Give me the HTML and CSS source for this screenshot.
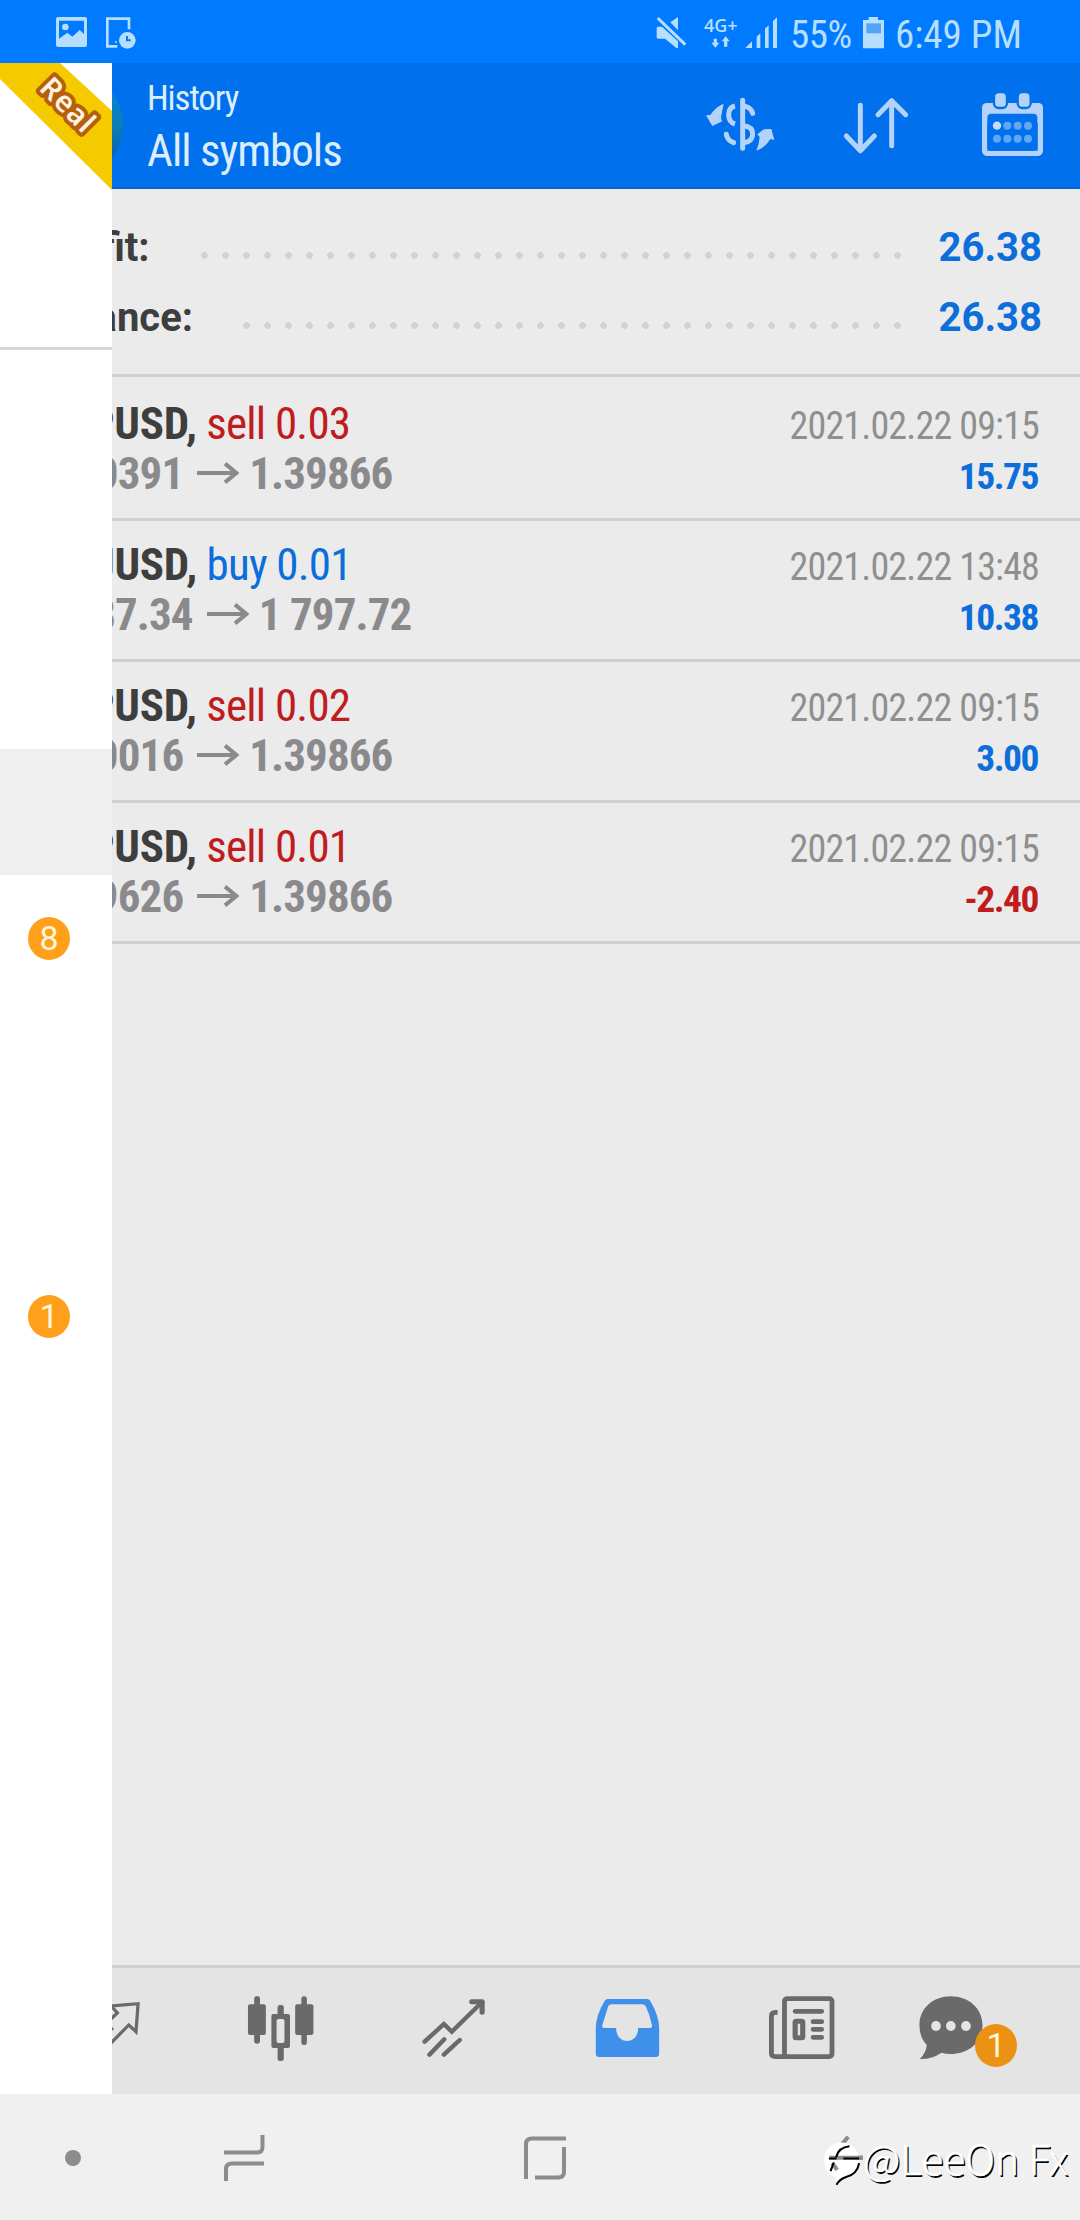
FILE: index.html
```html
<!DOCTYPE html>
<html lang="en">
<head>
<meta charset="utf-8">
<title>History</title>
<link rel="stylesheet" href="styles.css">
</head>
<body>
<div class="statusbar">
  <svg class="ic-photo" viewBox="168 51 93 90" width="31" height="30"><path fill="#b6deff" fill-rule="evenodd" d="M174 51H255Q261 51 261 57V135Q261 141 255 141H174Q168 141 168 135V57Q168 51 174 51ZM177 62V116L202 98L217 110L239 90L252 102V62Z"/><circle cx="196" cy="81" r="10" fill="#b6deff"/></svg>
  <svg class="ic-tablet" viewBox="318 51 90 96" width="30" height="32"><path fill="none" stroke="#b6deff" stroke-width="8" d="M387 88V56H322V139H352"/><circle cx="348" cy="126" r="3" fill="#b6deff"/><circle cx="382" cy="121" r="25" fill="#b6deff"/><path fill="none" stroke="#0a78e8" stroke-width="6" d="M381 108V121H392"/></svg>
  <svg class="ic-mute" viewBox="45 45 96 105" width="32" height="35"><path fill="#b6deff" d="M91 67L114 51V91ZM50 84Q50 80 54 80H66L114 124V144H109L75 116H54Q50 116 50 112Z"/><path d="M53 54L136 134" stroke="#b6deff" stroke-width="9"/></svg>
  <div class="network"><span class="net-label">4G+</span>
    <svg class="ic-data" viewBox="213 108 57 36" width="19" height="12"><path fill="#b6deff" d="M221 116H231V128H238L226 143L214 128H221ZM252 140H262V124H269L257 109L245 124H252Z"/></svg>
  </div>
  <svg class="ic-signal" viewBox="315 51 96 93" width="32" height="31"><path fill="#b6deff" d="M316 144L336 124V144ZM350 110L361 100V144H350ZM375 86L386 76V144H375ZM399 63L411 52V144H399Z"/></svg>
  <span class="cond battery-pct">55%</span>
  <svg class="ic-battery" viewBox="669 51 63 96" width="21" height="32"><path fill="#b6deff" d="M686 51H714V60H732V145H669V60H686Z"/><path fill="#55a3f5" d="M679 70H723V100H679Z"/></svg>
  <span class="cond clock">6:49 PM</span>
</div>

<div class="app">
  <header class="header">
    <div class="avatar"></div>
    <div class="titles"><div class="cond title-small">History</div><div class="cond title-big">All symbols</div></div>
    <svg class="ic-currency" viewBox="189 279 219 195" width="73" height="65"><g fill="#b5d3f8"><path d="M251 311L243 351Q244 362 247 364L217 378L198 346L211 345Q226 321 251 311Z"/><path d="M349 452Q358 430 359 411L352 403L372 388L394 387L403 420L391 417Q376 443 349 452Z"/></g><g fill="none" stroke="#b5d3f8" stroke-width="15"><path stroke-linecap="round" d="M308 301V445"/><path d="M285 318Q266 322 266 344Q266 366 285 372"/><path stroke-linecap="round" d="M259 403Q262 421 281 428"/><path stroke-linecap="round" d="M316 319Q334 324 338 340"/><path d="M312 377Q338 380 338 402Q338 424 312 428"/></g></svg>
    <svg class="ic-sort" viewBox="606 279 204 195" width="68" height="65"><path fill="none" stroke="#b5d3f8" stroke-width="15" stroke-linecap="round" stroke-linejoin="round" d="M661 316V450M619 408L661 452L703 408M755 437V304M714 344L755 302L797 344"/></svg>
    <svg class="ic-calendar" viewBox="1020 279 195 195" width="65" height="65"><rect x="1034" y="325" width="167" height="135" rx="8" fill="none" stroke="#b5d3f8" stroke-width="16"/><rect x="1026" y="309" width="183" height="60" rx="14" fill="#b5d3f8"/><rect x="1042" y="341" width="150" height="111" rx="12" fill="#0070ec"/><g fill="#b5d3f8" stroke="#0070ec" stroke-width="7"><rect x="1062" y="276" width="39" height="48" rx="14"/><rect x="1133" y="276" width="39" height="48" rx="14"/></g><g fill="#60a7f5"><circle cx="1102" cy="377" r="12"/><circle cx="1133" cy="377" r="12"/><circle cx="1164" cy="377" r="12"/><circle cx="1071" cy="416" r="12"/><circle cx="1102" cy="416" r="12"/><circle cx="1133" cy="416" r="12"/><circle cx="1164" cy="416" r="12"/></g><circle cx="1071" cy="377" r="12.500" fill="#c6dcfb"/></svg>
  </header>

  <section class="summary">
    <div class="sum-row"><span class="sum-label">Profit:</span><span class="dots dots-long"></span><span class="sum-value">26.38</span></div>
    <div class="sum-row"><span class="sum-label">Balance:</span><span class="dots dots-short"></span><span class="sum-value">26.38</span></div>
  </section>

  <main class="deals">
    <article class="deal first">
      <div class="line cond"><span class="left"><b class="symbol">GBPUSD,</b> <span class="sell">sell 0.03</span></span><span class="time">2021.02.22 09:15</span></div>
      <div class="line cond"><span class="left price">1.40391<svg class="arrow" viewBox="0 0 126 66" width="42" height="22"><path fill="none" stroke="#8a8a8c" stroke-width="12" d="M0 33H117M84 5L118 33L84 61"/></svg>1.39866</span><b class="profit plus">15.75</b></div>
    </article>
    <article class="deal">
      <div class="line cond"><span class="left"><b class="symbol">XAUUSD,</b> <span class="buy">buy 0.01</span></span><span class="time">2021.02.22 13:48</span></div>
      <div class="line cond"><span class="left price">1 787.34<svg class="arrow" viewBox="0 0 126 66" width="42" height="22"><path fill="none" stroke="#8a8a8c" stroke-width="12" d="M0 33H117M84 5L118 33L84 61"/></svg>1 797.72</span><b class="profit plus">10.38</b></div>
    </article>
    <article class="deal">
      <div class="line cond"><span class="left"><b class="symbol">GBPUSD,</b> <span class="sell">sell 0.02</span></span><span class="time">2021.02.22 09:15</span></div>
      <div class="line cond"><span class="left price">1.40016<svg class="arrow" viewBox="0 0 126 66" width="42" height="22"><path fill="none" stroke="#8a8a8c" stroke-width="12" d="M0 33H117M84 5L118 33L84 61"/></svg>1.39866</span><b class="profit plus">3.00</b></div>
    </article>
    <article class="deal">
      <div class="line cond"><span class="left"><b class="symbol">GBPUSD,</b> <span class="sell">sell 0.01</span></span><span class="time">2021.02.22 09:15</span></div>
      <div class="line cond"><span class="left price">1.39626<svg class="arrow" viewBox="0 0 126 66" width="42" height="22"><path fill="none" stroke="#8a8a8c" stroke-width="12" d="M0 33H117M84 5L118 33L84 61"/></svg>1.39866</span><b class="profit minus">-2.40</b></div>
    </article>
  </main>

  <nav class="tabs">
    <svg class="tab-quotes" viewBox="290.4 165 116.2 201" width="40" height="67" preserveAspectRatio="none"><path fill="none" stroke="#6a6a6a" stroke-width="9.500" d="M300 200L401 191L395 275L374 255L310 322M325 200L341 219L322 237M320 262L328 270"/></svg>
    <svg class="tab-candles" viewBox="711.4 165 209 201" width="72" height="67" preserveAspectRatio="none"><g fill="#6a6a6a"><rect x="720" y="193" width="52" height="92" rx="6"/><rect x="738" y="169" width="17" height="142" rx="7"/><rect x="857" y="193" width="53" height="92" rx="6"/><rect x="875" y="169" width="16" height="146" rx="7"/><rect x="788" y="222" width="54" height="102" rx="6"/><rect x="806" y="195" width="18" height="168" rx="7"/></g><rect x="803" y="237" width="23" height="72" rx="6" fill="#e4e4e4"/></svg>
    <svg class="tab-trend" viewBox="1219.6 165 197.500 201" width="68" height="67" preserveAspectRatio="none"><path fill="none" stroke="#6a6a6a" stroke-width="13" stroke-linecap="round" d="M1233 305L1289 252L1312 275L1400 186M1247 344L1290 298M1289 344L1335 300"/><path fill="none" stroke="#6a6a6a" stroke-width="15" stroke-linecap="round" stroke-linejoin="round" d="M1370 185H1400V217"/></svg>
    <svg class="tab-history" viewBox="156.8 165 197.500 201" width="68" height="67" preserveAspectRatio="none"><path fill="#3f90ea" fill-rule="evenodd" d="M197 177H311Q317 177 320 182Q346 227 346 265V342Q346 351 336 351H172Q162 351 162 342V265Q162 226 188 182Q191 177 197 177ZM208 193Q201 193 198 199L181 255Q179 264 186 264H221C221 316 285 316 285 264H320Q327 264 325 255Q319 225 307 199Q304 193 297 193Z"/></svg>
    <svg class="tab-news" viewBox="659.2 165 203.300 201" width="70" height="67" preserveAspectRatio="none"><g fill="none" stroke="#6a6a6a" stroke-width="14"><rect x="710" y="176" width="138" height="174" rx="8"/><path d="M690 217H684Q672 217 672 229V340Q672 350 684 350H715"/><rect x="741" y="244" width="22" height="49" rx="3" stroke-width="15"/><path stroke-linecap="round" d="M741 214H818M793 245H818M793 268H818M793 292H818"/></g></svg>
    <div class="tab-chat">
      <svg viewBox="1097.700 165 197.500 201" width="68" height="67" preserveAspectRatio="none"><path fill="#6a6a6a" d="M1193 169C1245 169 1285 205 1285 256C1285 307 1245 342 1193 342Q1178 342 1166 338Q1138 358 1103 357Q1122 337 1123 315Q1102 292 1102 256C1102 205 1141 169 1193 169Z"/><g fill="#e4e4e4"><ellipse cx="1150" cy="258" rx="14" ry="15"/><ellipse cx="1193" cy="258" rx="14" ry="15"/><ellipse cx="1237" cy="258" rx="14" ry="15"/></g></svg>
      <span class="badge chat-badge">1</span>
    </div>
  </nav>

  <aside class="drawer">
    <div class="account"><svg class="ribbon" viewBox="0 0 112 128" width="112" height="128"><path fill="#f5cb00" d="M0 0H60L112 48V127L0 16Z"/><text x="68" y="42" transform="rotate(45 68 42)" dy="10" text-anchor="middle" class="ribbon-text">Real</text></svg></div>
    <div class="menu-gap"></div>
    <div class="menu-item selected"></div>
    <div class="menu-item"><span class="badge">8</span></div>
    <div class="menu-spacer"></div>
    <div class="menu-item"><span class="badge">1</span></div>
  </aside>
</div>

<footer class="navbar">
  <span class="nav-dot"></span>
  <svg class="nav-recent" viewBox="0 0 41 48" width="41" height="48"><path fill="none" stroke="#8c8c8c" stroke-width="4" d="M38.500 1V13Q38.500 18.500 33 18.500H0M40 29.500H8Q2 29.500 2 35V47"/></svg>
  <svg class="nav-home" viewBox="0 0 42 44" width="42" height="44"><path fill="none" stroke="#8c8c8c" stroke-width="4" d="M2 43V8Q2 2.500 8 2.500H42M40 11V36Q40 41.500 34 41.500H11"/></svg>
  <svg class="nav-back" viewBox="820 582 125 160" width="43" height="53" preserveAspectRatio="none"><path fill="none" stroke="#8c8c8c" stroke-width="12" d="M896 590L845 654L864 690M840 654H939"/><path fill="#fff" d="M876 608C905 608 928 630 928 660C928 690 905 712 880 714L862 728L860 712C840 708 826 688 826 660C826 630 848 608 876 608Z"/><path fill="none" stroke="#8c8c8c" stroke-width="12" d="M842 654H939M850 670L864 690"/><path fill="none" stroke="#000" stroke-width="6" d="M840 656H862M882 656H928M861 652Q868 622 900 619M854 668L845 694M928 670Q922 704 890 712Q872 718 862 735"/></svg>
  <span class="watermark">@LeeOn Fx</span>
</footer>
</body>
</html>
```

FILE: styles.css
```css
* { box-sizing: border-box; }
body {
  margin: 0;
  width: 1080px;
  height: 2220px;
  overflow: hidden;
  background: #ebebeb;
  font-family: Roboto, "Liberation Sans", sans-serif;
}
svg { display: block; flex: none; }
.cond {
  font-family: "Roboto Condensed", Roboto, "Liberation Sans", sans-serif;
  font-stretch: 75%;
  white-space: nowrap;
}

/* status bar */
.statusbar {
  height: 63px;
  background: #007aff;
  color: #b6deff;
  display: flex;
  align-items: flex-start;
}
.ic-photo { margin: 17px 0 0 56px; }
.ic-tablet { margin: 17px 0 0 19px; }
.ic-mute { margin: 15px 0 0 519px; }
.network { margin: 16px 0 0 17px; width: 34px; }
.net-label { display: block; font: 600 18px/18px "Open Sans", sans-serif; }
.ic-data { margin: 2px 0 0 7px; }
.ic-signal { margin: 17px 0 0 7px; }
.battery-pct { margin: 11px 0 0 13px; width: 61px; font-size: 39px; line-height: 48px; letter-spacing: -0.5px; }
.ic-battery { margin: 17px 0 0 12px; }
.clock { margin: 11px 0 0 11px; font-size: 39px; line-height: 48px; letter-spacing: 0; }

.app {
  position: relative;
  height: 2031px;
  display: flex;
  flex-direction: column;
}

/* header */
.header {
  height: 126px;
  background: #0070ec;
  border-bottom: 2px solid #0b61c4;
  display: flex;
  align-items: flex-start;
  padding-right: 35px;
}
.avatar {
  width: 110px;
  height: 110px;
  margin: 7px 0 0 13px;
  border-radius: 50%;
  background: linear-gradient(#0b7fd6 20%, #0a7fb4 50%, #0a60b0 80%);
}
.titles { margin: 22px 0 0 24px; color: #dcedff; flex: 1; }
.title-small { font-size: 35px; line-height: 28px; letter-spacing: -1.1px; }
.title-big { font-size: 45px; line-height: 54px; margin-top: 11px; letter-spacing: -1px; }
.ic-currency, .ic-sort, .ic-calendar { margin-top: 30px; }
.ic-sort { margin-left: 66px; }
.ic-calendar { margin-left: 70px; }

/* totals */
.summary {
  height: 188px;
  padding: 24px 38px 0 38px;
  border-bottom: 3px solid #d0d0d0;
}
.sum-row { display: flex; height: 70px; line-height: 70px; font-size: 40px; font-weight: 700; }
.sum-label { color: #3e3e3e; }
.sum-value { color: #0c6eda; margin-left: 31px; }
.dots {
  height: 21px;
  margin: 32px 0 0 auto;
  background: radial-gradient(circle at center, #d2d2d2 3px, transparent 3.700px) 0 0 / 21px 21px repeat-x;
}
.dots-long { width: 714px; }
.dots-short { width: 672px; }

/* deals */
.deal {
  height: 141px;
  padding: 19px 41px 0 38px;
  border-bottom: 3px solid #d0d0d0;
}
.deal.first { height: 144px; padding-top: 22px; }
.line {
  display: flex;
  justify-content: space-between;
  align-items: baseline;
  height: 50px;
  line-height: 50px;
  font-size: 45px;
  letter-spacing: -0.8px;
}
.symbol { color: #3e3e3e; letter-spacing: -0.3px; }
.sell { color: #c01c20; }
.buy { color: #0c6eda; }
.price { color: #8a8a8c; font-weight: 700; letter-spacing: -0.9px; margin-left: 2px; }
.arrow { display: inline-block; margin: 0 10px 0 14px; vertical-align: 5px; }
.time { color: #8f8f8f; font-size: 38px; margin-right: 0; letter-spacing: -0.83px; }
.profit { font-size: 37.500px; margin-right: 1px; letter-spacing: -1.500px; }
.plus { color: #0c6eda; }
.minus { color: #c01c20; }

/* bottom tabs */
.tabs {
  height: 129px;
  margin-top: auto;
  padding: 27px 0 0 100px;
  background: #e4e4e4;
  border-top: 3px solid #d0d0d0;
  display: flex;
}
.tab-candles { margin-left: 105px; }
.tab-trend { margin-left: 103px; }
.tab-history { margin-left: 106px; }
.tab-news { margin-left: 105px; }
.tab-chat { position: relative; margin-left: 81px; }
.badge {
  display: block;
  width: 42px;
  height: 43px;
  border-radius: 50%;
  background: #ff9f1a;
  color: #fff6d8;
  font-size: 34px;
  line-height: 43px;
  text-align: center;
}
.chat-badge { position: absolute; left: 57px; top: 29px; background: #eb9114; }

/* side drawer */
.drawer {
  position: absolute;
  left: 0;
  top: 0;
  width: 112px;
  height: 2031px;
  background: #fff;
}
.account { height: 287px; border-bottom: 3px solid #d6d6d6; }
.ribbon-text {
  font: 600 29px "Noto Sans", sans-serif;
  letter-spacing: 1px;
  fill: #fff3e2;
  stroke: #b5600c;
  stroke-width: 8px;
  stroke-linejoin: round;
  paint-order: stroke;
}
.menu-gap { height: 399px; }
.menu-item { height: 126px; padding: 42px 0 0 28px; }
.selected { background: #efefef; }
.menu-spacer { height: 252px; }

/* system navigation */
.navbar { height: 126px; background: #f0f0f0; display: flex; align-items: flex-start; }
.nav-dot { width: 16px; height: 16px; margin: 56px 0 0 65px; border-radius: 50%; background: #8c8c8c; }
.nav-recent { margin: 40px 0 0 143px; }
.nav-home { margin: 42px 0 0 259px; }
.nav-back { margin: 40px 0 0 256px; }
.watermark {
  margin: 33px 0 0 -2px;
  font: 300 41px/60px "Noto Sans CJK SC", sans-serif;
  color: #fff;
  -webkit-text-stroke: 0.5px #fff;
  text-shadow: 1.5px 1.5px 0 #000;
  white-space: nowrap;
}
```
